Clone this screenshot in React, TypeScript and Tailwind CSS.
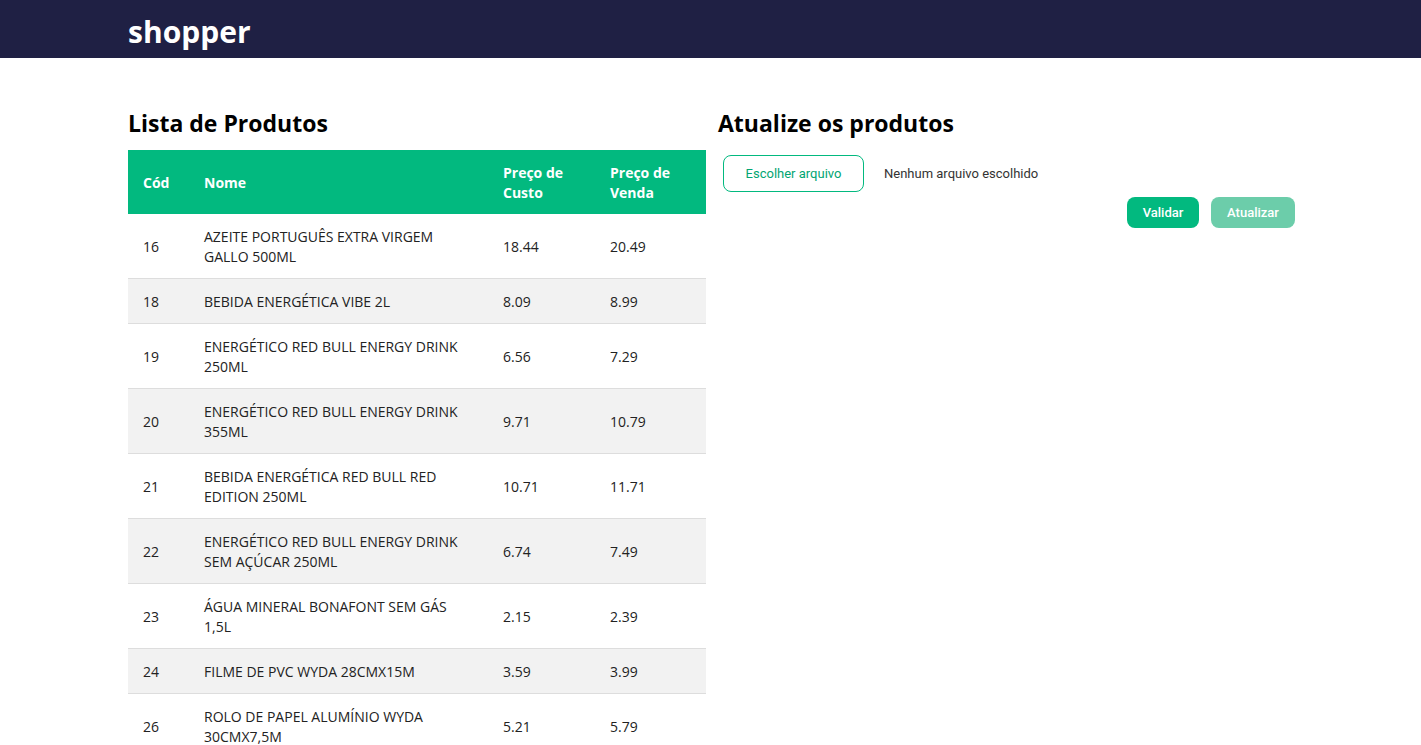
const products = [
  { code: 16, name: "AZEITE PORTUGUÊS EXTRA VIRGEM GALLO 500ML", cost: "18.44", sale: "20.49" },
  { code: 18, name: "BEBIDA ENERGÉTICA VIBE 2L", cost: "8.09", sale: "8.99" },
  { code: 19, name: "ENERGÉTICO RED BULL ENERGY DRINK 250ML", cost: "6.56", sale: "7.29" },
  { code: 20, name: "ENERGÉTICO RED BULL ENERGY DRINK 355ML", cost: "9.71", sale: "10.79" },
  { code: 21, name: "BEBIDA ENERGÉTICA RED BULL RED EDITION 250ML", cost: "10.71", sale: "11.71" },
  { code: 22, name: "ENERGÉTICO RED BULL ENERGY DRINK SEM AÇÚCAR 250ML", cost: "6.74", sale: "7.49" },
  { code: 23, name: "ÁGUA MINERAL BONAFONT SEM GÁS 1,5L", cost: "2.15", sale: "2.39" },
  { code: 24, name: "FILME DE PVC WYDA 28CMX15M", cost: "3.59", sale: "3.99" },
  { code: 26, name: "ROLO DE PAPEL ALUMÍNIO WYDA 30CMX7,5M", cost: "5.21", sale: "5.79" },
];

export default function App() {
  return (
    <div className="min-h-screen bg-white font-['Open_Sans',sans-serif] text-black">
      <header className="h-[58px] bg-[#1f2044] px-[128px] flex items-center">
        <h1 className="text-[30px] font-bold text-white leading-none mt-[5px]">shopper</h1>
      </header>

      <main className="px-[128px] pt-[49px] grid grid-cols-[578px_1fr] gap-3">
        <section>
          <h2 className="text-[23px] font-bold leading-[32px] mb-[11px]">Lista de Produtos</h2>
          <table className="w-full border-collapse text-[14px] leading-5 table-fixed">
            <thead>
              <tr className="bg-[#02b97f] text-white text-left">
                <th className="w-[61px] px-[15px] pt-[13px] pb-[11px] font-bold">Cód</th>
                <th className="w-[299px] px-[15px] pt-[13px] pb-[11px] font-bold">Nome</th>
                <th className="w-[107px] px-[15px] pt-[13px] pb-[11px] font-bold">Preço de Custo</th>
                <th className="px-[15px] pt-[13px] pb-[11px] font-bold">Preço de Venda</th>
              </tr>
            </thead>
            <tbody>
              {products.map((p, i) => (
                <tr
                  key={p.code}
                  className={`border-b border-[#dddddd] ${i % 2 === 1 ? "bg-[#f2f2f2]" : "bg-white"}`}
                >
                  <td className="px-[15px] pt-[13px] pb-[11px] text-[#222]">{p.code}</td>
                  <td className="px-[15px] pt-[13px] pb-[11px] text-[#222]">{p.name}</td>
                  <td className="px-[15px] pt-[13px] pb-[11px] text-[#222]">{p.cost}</td>
                  <td className="px-[15px] pt-[13px] pb-[11px] text-[#222]">{p.sale}</td>
                </tr>
              ))}
            </tbody>
          </table>
        </section>

        <section>
          <h2 className="text-[23px] font-bold leading-[32px]">Atualize os produtos</h2>
          <div className="mt-[16px] ml-[5px] flex items-center font-['Roboto',sans-serif] text-[13px]">
            <button className="h-[37px] w-[141px] rounded-lg border border-[#02b97f] text-[#02a572] bg-white">
              Escolher arquivo
            </button>
            <span className="ml-5 text-[#333]">Nenhum arquivo escolhido</span>
          </div>
          <div className="mt-[5px] -mr-[2px] flex justify-end gap-3 font-['Roboto',sans-serif] text-[13px] font-medium">
            <button className="h-[31px] w-[72px] rounded-lg bg-[#02b97f] text-white">Validar</button>
            <button className="h-[31px] w-[84px] rounded-lg bg-[#6ccdaa] text-white">Atualizar</button>
          </div>
        </section>
      </main>
    </div>
  );
}
